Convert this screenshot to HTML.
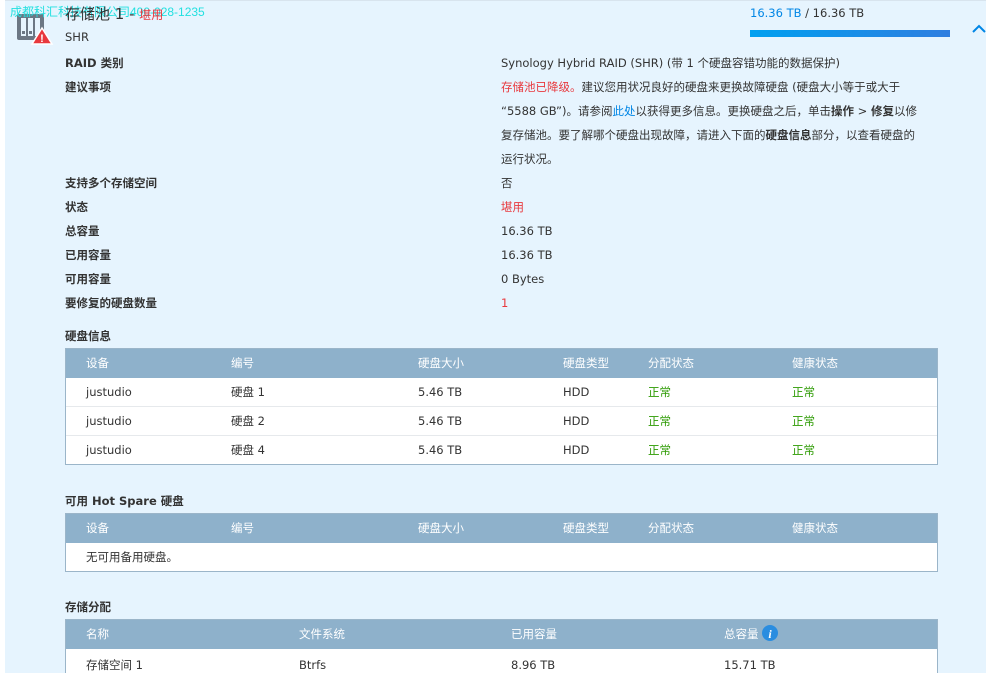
<!DOCTYPE html><html style="overflow:hidden;height:673px"><head><meta charset="utf-8"><style>
body{margin:0;width:986px;height:673px;overflow:hidden;position:relative;background:#fff;font-family:"DejaVu Sans","Noto Sans CJK SC",sans-serif;font-size:11.5px;color:#333}
#bg{position:absolute;left:5px;top:0;width:981px;height:673px;background:#e6f4fe;border-top:1px solid #d8e4ee}
.a{position:absolute;white-space:nowrap;line-height:24px}
.b{font-weight:bold}
.r{color:#e8383d}
.l{color:#0086e5}
.tb{position:absolute;left:65px;width:871px;border:1px solid #9bb5c9;background:#fff}
.h{height:29px;background:#8eb1cb;color:#fff;position:relative}
.row{height:28px;position:relative;border-top:1px solid #e6e9ec}
.h span,.row span{position:absolute;top:0;line-height:28px}
.g{color:#2b9a00}
</style></head><body><div id="bg"></div>
<svg style="position:absolute;left:16px;top:12px" width="38" height="34"><rect x="1" y="2" width="27" height="26" rx="2" fill="#6c7784"/><rect x="5" y="6" width="5" height="18" fill="#e6f4fe"/><rect x="12" y="6" width="5" height="18" fill="#e6f4fe"/><rect x="19" y="6" width="5" height="18" fill="#e6f4fe"/><rect x="6" y="19" width="3" height="3" fill="#6c7784"/><rect x="13" y="19" width="3" height="3" fill="#6c7784"/><path d="M26 16 L36 32 L16 32 Z" fill="#e8383d" stroke="#fff" stroke-width="1.5"/><text x="26" y="30" font-size="11" fill="#fff" text-anchor="middle" font-weight="bold" font-family="Liberation Sans">!</text></svg>
<div class="a" style="left:10px;top:5px;color:#22e0e0;font-size:12px;line-height:14px;font-family:'Liberation Sans','Noto Sans CJK SC',sans-serif">成都科汇科技有限公司400-028-1235</div>
<div class="a" style="left:65px;top:4px;font-size:15px;line-height:20px">存储池 1 - <span class="r" style="font-size:12px">堪用</span></div>
<div class="a" style="left:65px;top:25px">SHR</div>
<div class="a" style="left:750px;top:5px;line-height:16px"><span class="l">16.36 TB</span> / 16.36 TB</div>
<div style="position:absolute;left:750px;top:30px;width:200px;height:7px;background:linear-gradient(90deg,#00a0f0,#2f7ee0)"></div>
<svg style="position:absolute;left:972px;top:24px" width="14" height="10"><path d="M1 8 L7 2 L13 8" stroke="#0086e5" stroke-width="2" fill="none"/></svg>
<div class="a b" style="left:65px;top:51px">RAID 类别</div><div class="a" style="left:501px;top:51px">Synology Hybrid RAID (SHR) (带 1 个硬盘容错功能的数据保护)</div>
<div class="a b" style="left:65px;top:75px">建议事项</div>
<div class="a" style="left:501px;top:75px"><span class="r">存储池已降级。</span>建议您用状况良好的硬盘来更换故障硬盘 (硬盘大小等于或大于<br>“5588 GB”)。请参阅<span class="l">此处</span>以获得更多信息。更换硬盘之后，单击<b>操作</b> &gt; <b>修复</b>以修<br>复存储池。要了解哪个硬盘出现故障，请进入下面的<b>硬盘信息</b>部分，以查看硬盘的<br>运行状况。</div>
<div class="a b" style="left:65px;top:171px">支持多个存储空间</div><div class="a" style="left:501px;top:171px">否</div>
<div class="a b" style="left:65px;top:195px">状态</div><div class="a r" style="left:501px;top:195px">堪用</div>
<div class="a b" style="left:65px;top:219px">总容量</div><div class="a" style="left:501px;top:219px">16.36 TB</div>
<div class="a b" style="left:65px;top:243px">已用容量</div><div class="a" style="left:501px;top:243px">16.36 TB</div>
<div class="a b" style="left:65px;top:267px">可用容量</div><div class="a" style="left:501px;top:267px">0 Bytes</div>
<div class="a b" style="left:65px;top:291px">要修复的硬盘数量</div><div class="a r" style="left:501px;top:291px">1</div>
<div class="a b" style="left:65px;top:324px">硬盘信息</div>
<div class="tb" style="top:348px">
<div class="h"><span style="left:20px">设备</span><span style="left:165px">编号</span><span style="left:352px">硬盘大小</span><span style="left:497px">硬盘类型</span><span style="left:582px">分配状态</span><span style="left:726px">健康状态</span></div>
<div class="row" style="border:0"><span style="left:20px">justudio</span><span style="left:165px">硬盘 1</span><span style="left:352px">5.46 TB</span><span style="left:497px">HDD</span><span class="g" style="left:582px">正常</span><span class="g" style="left:726px">正常</span></div>
<div class="row"><span style="left:20px">justudio</span><span style="left:165px">硬盘 2</span><span style="left:352px">5.46 TB</span><span style="left:497px">HDD</span><span class="g" style="left:582px">正常</span><span class="g" style="left:726px">正常</span></div>
<div class="row"><span style="left:20px">justudio</span><span style="left:165px">硬盘 4</span><span style="left:352px">5.46 TB</span><span style="left:497px">HDD</span><span class="g" style="left:582px">正常</span><span class="g" style="left:726px">正常</span></div>
</div>
<div class="a b" style="left:65px;top:489px">可用 Hot Spare 硬盘</div>
<div class="tb" style="top:513px">
<div class="h"><span style="left:20px">设备</span><span style="left:165px">编号</span><span style="left:352px">硬盘大小</span><span style="left:497px">硬盘类型</span><span style="left:582px">分配状态</span><span style="left:726px">健康状态</span></div>
<div class="row" style="border:0"><span style="left:20px">无可用备用硬盘。</span></div>
</div>
<div class="a b" style="left:65px;top:595px">存储分配</div>
<div class="tb" style="top:619px;height:60px;border-bottom:0">
<div class="h"><span style="left:20px">名称</span><span style="left:233px">文件系统</span><span style="left:445px">已用容量</span><span style="left:658px">总容量 <svg width="16" height="16" style="vertical-align:-3px"><circle cx="8" cy="8" r="8" fill="#2a8de0"/><text x="8" y="13" font-size="12" fill="#fff" text-anchor="middle" font-style="italic" font-weight="bold" font-family="Liberation Serif">i</text></svg></span></div>
<div class="row" style="border:0"><span style="left:20px;top:2px">存储空间 1</span><span style="left:233px;top:2px">Btrfs</span><span style="left:445px;top:2px">8.96 TB</span><span style="left:658px;top:2px">15.71 TB</span></div>
</div>
</body></html>
